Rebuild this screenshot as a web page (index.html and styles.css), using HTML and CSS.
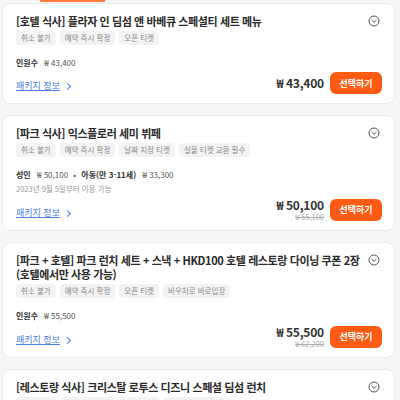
FILE: index.html
```html
<!DOCTYPE html>
<html lang="ko">
<head>
    <meta charset="UTF-8">
    <meta name="viewport" content="width=device-width, initial-scale=1.0">
    <title>패키지 선택</title>
    <link rel="stylesheet" href="styles.css">
</head>
<body>

<div class="tabs">
    <span class="tab-line"></span>
</div>

<div class="list">

    <div class="card">
        <div class="card-head">
            <h3>[호텔 식사] 플라자 인 딤섬 앤 바베큐 스페셜티 세트 메뉴</h3>
            <svg class="toggle" viewBox="0 0 12 12" width="12" height="12"><circle cx="6" cy="6" r="5" fill="none" stroke="#555" stroke-width="1"/><path d="M3.8 5.2 L6 7.3 L8.2 5.2" fill="none" stroke="#555" stroke-width="1" stroke-linecap="round" stroke-linejoin="round"/></svg>
        </div>
        <div class="tags">
            <span>취소 불가</span>
            <span>예약 즉시 확정</span>
            <span>오픈 티켓</span>
        </div>
        <p class="info"><b>인원수</b> <span>₩ 43,400</span></p>
        <div class="card-foot">
            <a href="#" class="more">패키지 정보</a>
            <div class="buy">
                <div class="price">
                    <strong>₩ 43,400</strong>
                </div>
                <button>선택하기</button>
            </div>
        </div>
    </div>

    <div class="card">
        <div class="card-head">
            <h3>[파크 식사] 익스플로러 세미 뷔페</h3>
            <svg class="toggle" viewBox="0 0 12 12" width="12" height="12"><circle cx="6" cy="6" r="5" fill="none" stroke="#555" stroke-width="1"/><path d="M3.8 5.2 L6 7.3 L8.2 5.2" fill="none" stroke="#555" stroke-width="1" stroke-linecap="round" stroke-linejoin="round"/></svg>
        </div>
        <div class="tags">
            <span>취소 불가</span>
            <span>예약 즉시 확정</span>
            <span>날짜 지정 티켓</span>
            <span>실물 티켓 교환 필수</span>
        </div>
        <p class="info"><b>성인</b> <span>₩ 50,100</span> <i>•</i> <b>아동(만 3-11세)</b> <span>₩ 33,300</span></p>
        <p class="note">2023년 9월 5일부터 이용 가능</p>
        <div class="card-foot">
            <a href="#" class="more">패키지 정보</a>
            <div class="buy">
                <div class="price">
                    <strong>₩ 50,100</strong>
                    <del>₩ 55,100</del>
                </div>
                <button>선택하기</button>
            </div>
        </div>
    </div>

    <div class="card">
        <div class="card-head">
            <h3>[파크 + 호텔] 파크 런치 세트 + 스낵 + HKD100 호텔 레스토랑 다이닝 쿠폰 2장 (호텔에서만 사용 가능)</h3>
            <svg class="toggle" viewBox="0 0 12 12" width="12" height="12"><circle cx="6" cy="6" r="5" fill="none" stroke="#555" stroke-width="1"/><path d="M3.8 5.2 L6 7.3 L8.2 5.2" fill="none" stroke="#555" stroke-width="1" stroke-linecap="round" stroke-linejoin="round"/></svg>
        </div>
        <div class="tags">
            <span>취소 불가</span>
            <span>예약 즉시 확정</span>
            <span>오픈 티켓</span>
            <span>바우처로 바로입장</span>
        </div>
        <p class="info"><b>인원수</b> <span>₩ 55,500</span></p>
        <div class="card-foot">
            <a href="#" class="more">패키지 정보</a>
            <div class="buy">
                <div class="price">
                    <strong>₩ 55,500</strong>
                    <del>₩ 62,200</del>
                </div>
                <button>선택하기</button>
            </div>
        </div>
    </div>

    <div class="card">
        <div class="card-head">
            <h3>[레스토랑 식사] 크리스탈 로투스 디즈니 스페셜 딤섬 런치</h3>
            <svg class="toggle" viewBox="0 0 12 12" width="12" height="12"><circle cx="6" cy="6" r="5" fill="none" stroke="#555" stroke-width="1"/><path d="M3.8 5.2 L6 7.3 L8.2 5.2" fill="none" stroke="#555" stroke-width="1" stroke-linecap="round" stroke-linejoin="round"/></svg>
        </div>
        <div class="tags">
            <span>취소 불가</span>
            <span>예약 즉시 확정</span>
            <span>오픈 티켓</span>
            <span>바우처로 바로입장</span>
        </div>
    </div>

</div>

</body>
</html>
```

FILE: styles.css
```css
* {
    box-sizing: border-box;
    margin: 0;
    padding: 0;
}

body {
    font-family: "Noto Sans CJK KR", "Noto Sans", sans-serif;
    background: #f7f7f7;
    color: #212121;
    overflow: hidden;
}

.tabs {
    height: 3px;
    position: relative;
}

.tab-line {
    position: absolute;
    left: 40px;
    top: 0;
    width: 65px;
    height: 2px;
    background: #ff7a3d;
}

.list {
    display: flex;
    flex-direction: column;
    gap: 11px;
    padding: 0 5px 0 2px;
}

.card {
    background: #fff;
    border: 1px solid #ececec;
    border-radius: 8px;
    padding: 10px 12px 9px 13px;
}

.card-head {
    display: flex;
    justify-content: space-between;
    align-items: flex-start;
    gap: 6px;
}

.card-head h3 {
    font-size: 11px;
    font-weight: 700;
    line-height: 14px;
    color: #2a2a2a;
    letter-spacing: -0.4px;
}

.toggle {
    flex-shrink: 0;
    margin: 1px 2px 0 0;
}

.tags {
    display: flex;
    gap: 4px;
    margin-top: 3px;
    white-space: nowrap;
}

.tags span {
    background: #f3f3f3;
    color: #8a8a8a;
    font-size: 7.5px;
    line-height: 14px;
    padding: 0 5px;
    border-radius: 4px;
}

.info {
    font-size: 8px;
    line-height: 14px;
    margin-top: 11px;
    color: #555;
}

.info b {
    font-weight: 700;
    color: #333;
    margin-right: 4px;
}

.info i {
    font-style: normal;
    margin: 0 3px;
}

.note {
    font-size: 7.5px;
    line-height: 14px;
    color: #999;
}

.card-foot {
    display: flex;
    justify-content: space-between;
    align-items: flex-end;
    margin-top: 2px;
}

.more {
    font-size: 9px;
    line-height: 16px;
    color: #4a7fe0;
    text-decoration: underline;
    display: flex;
    align-items: center;
    gap: 5px;
}

.more::after {
    content: "";
    width: 4px;
    height: 4px;
    border-top: 1px solid #4a7fe0;
    border-right: 1px solid #4a7fe0;
    transform: rotate(45deg);
}

.buy {
    display: flex;
    align-items: center;
    gap: 6px;
}

.price {
    display: flex;
    flex-direction: column;
    align-items: flex-end;
}

.price strong {
    font-size: 12px;
    line-height: 14px;
    font-weight: 700;
    color: #333;
    letter-spacing: -0.2px;
}

.price del {
    font-size: 7.5px;
    line-height: 9px;
    color: #aaa;
}

button {
    background: #ff5b14;
    color: #fff;
    border: none;
    border-radius: 6px;
    font-family: inherit;
    font-size: 9px;
    font-weight: 700;
    width: 52px;
    height: 22px;
    cursor: pointer;
}
```
